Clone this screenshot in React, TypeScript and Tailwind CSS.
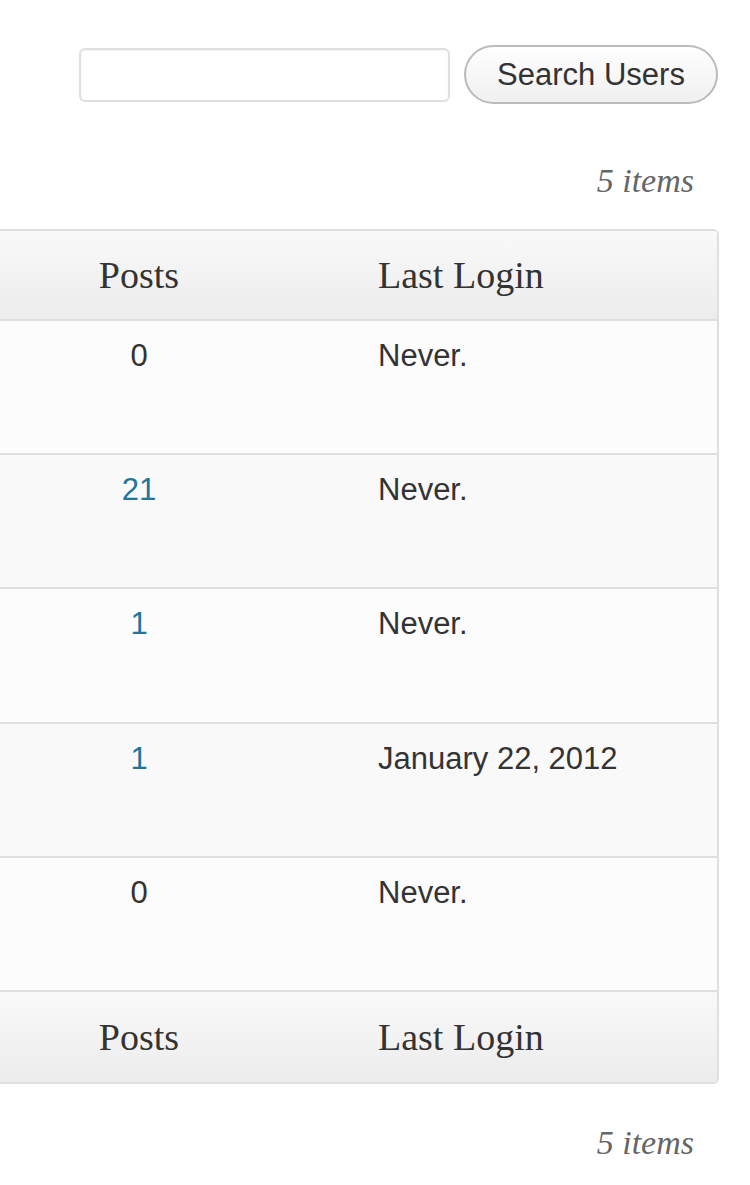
import React from 'react'

type Row = { posts: number; linked: boolean; login: string }

const rows: Row[] = [
  { posts: 0, linked: false, login: 'Never.' },
  { posts: 21, linked: true, login: 'Never.' },
  { posts: 1, linked: true, login: 'Never.' },
  { posts: 1, linked: true, login: 'January 22, 2012' },
  { posts: 0, linked: false, login: 'Never.' },
]

function HeadRow({ footer }: { footer?: boolean }) {
  return (
    <div
      className={`grid grid-cols-[278px_1fr] items-center bg-linear-to-b from-[#f9f9f9] to-[#ececec] font-['Liberation_Serif',serif] text-[38px] leading-none text-[#333] ${
        footer ? 'h-[90px]' : 'h-[90px] border-b-2 border-[#dfdfdf]'
      }`}
    >
      <div className="text-center">Posts</div>
      <div className="pl-[100px]">Last Login</div>
    </div>
  )
}

export default function App() {
  return (
    <div className="w-[750px] h-[1185px] overflow-hidden bg-white font-['Liberation_Sans',Arial,sans-serif]">
      {/* search box */}
      <div className="flex items-center justify-end gap-[14px] pt-[45px] pr-[32px]">
        <input
          type="text"
          className="w-[371px] h-[54px] rounded-[6px] border-2 border-[#dfdfdf] bg-white shadow-[inset_0_1px_2px_rgba(0,0,0,0.05)] outline-none"
        />
        <button className="w-[254px] h-[59px] rounded-full border-2 border-[#bbb] bg-linear-to-b from-[#fefefe] to-[#f0f0f0] text-[31px] leading-none text-[#333]">
          Search Users
        </button>
      </div>

      <div className="mt-[57px] pr-[56px] text-right font-['Liberation_Serif',serif] italic text-[34px] leading-[40px] text-[#666]">
        5 items
      </div>

      {/* users table */}
      <div className="mt-[28px] w-[719px] overflow-hidden rounded-r-[6px] border-y-2 border-r-2 border-[#dfdfdf]">
        <HeadRow />
        {rows.map((r, i) => (
          <div
            key={i}
            className={`grid grid-cols-[278px_1fr] h-[134.2px] border-b-2 border-[#dfdfdf] pt-[13px] text-[31px] leading-[1.4] text-[#333] ${
              i % 2 === 1 ? 'bg-[#f9f9f9]' : 'bg-[#fcfcfc]'
            }`}
          >
            <div className={`text-center ${r.linked ? 'text-[#21759b]' : ''}`}>{r.posts}</div>
            <div className="pl-[100px]">{r.login}</div>
          </div>
        ))}
        <HeadRow footer />
      </div>

      <div className="mt-[39px] pr-[56px] text-right font-['Liberation_Serif',serif] italic text-[34px] leading-[40px] text-[#666]">
        5 items
      </div>
    </div>
  )
}
